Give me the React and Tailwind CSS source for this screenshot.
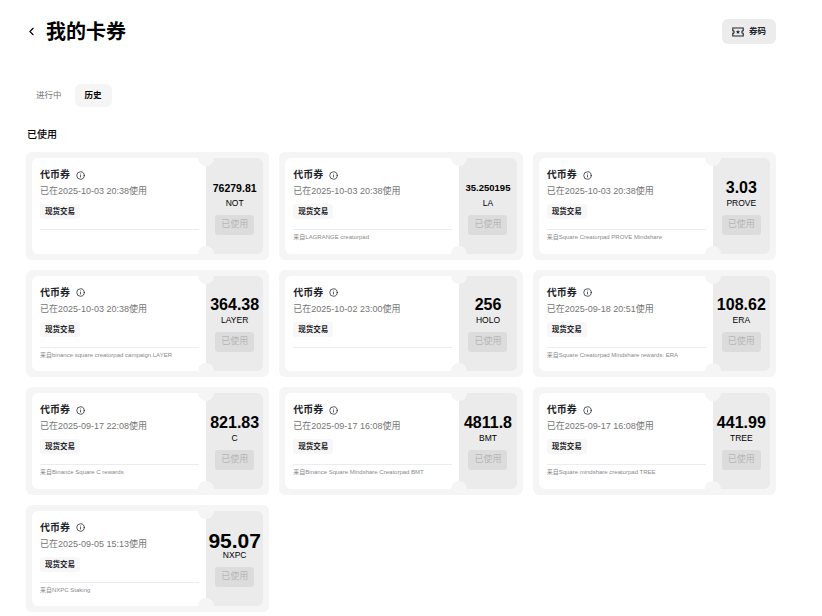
import { ChevronLeft, Info } from 'lucide-react'

const coupons = [
  { amount: '76279.81', size: 'text-[10.5px]', symbol: 'NOT', date: '2025-10-03 20:38' },
  { amount: '35.250195', size: 'text-[9.5px]', symbol: 'LA', date: '2025-10-03 20:38', from: 'LAGRANGE creatorpad' },
  { amount: '3.03', size: 'text-[16px]', symbol: 'PROVE', date: '2025-10-03 20:38', from: 'Square Creatorpad PROVE Mindshare' },
  { amount: '364.38', size: 'text-[16px]', symbol: 'LAYER', date: '2025-10-03 20:38', from: 'binance square creatorpad campaign LAYER' },
  { amount: '256', size: 'text-[16px]', symbol: 'HOLO', date: '2025-10-02 23:00' },
  { amount: '108.62', size: 'text-[16px]', symbol: 'ERA', date: '2025-09-18 20:51', from: 'Square Creatorpad Mindshare rewards: ERA' },
  { amount: '821.83', size: 'text-[16px]', symbol: 'C', date: '2025-09-17 22:08', from: 'Binance Square C rewards' },
  { amount: '4811.8', size: 'text-[16px]', symbol: 'BMT', date: '2025-09-17 16:08', from: 'Binance Square Mindshare Creatorpad BMT' },
  { amount: '441.99', size: 'text-[16px]', symbol: 'TREE', date: '2025-09-17 16:08', from: 'Square mindshare creatorpad TREE' },
  { amount: '95.07', size: 'text-[21px]', symbol: 'NXPC', date: '2025-09-05 15:13', from: 'NXPC Staking', tight: true },
]

function TicketIcon() {
  return (
    <svg width="12" height="12" viewBox="0 0 12 12" fill="none" stroke="#1e2329" strokeWidth="1.1">
      <path d="M.8 2h10.4v2.6a1.4 1.4 0 0 0 0 2.8V10H.8V7.4a1.4 1.4 0 0 0 0-2.8z" />
      <path d="M6 3.8l.6 1.4 1.5.1-1.1 1 .3 1.5L6 7l-1.3.8.3-1.5-1.1-1 1.5-.1z" fill="#1e2329" stroke="none" />
    </svg>
  )
}

function CouponCard({ coupon }) {
  return (
    <div className="h-[107.5px] rounded-md bg-[#f5f5f5] p-[6px]">
      <div className="relative flex h-full overflow-hidden rounded-md">
        <div className="w-[174px] bg-white pl-2 pr-[7px] pt-[11px]">
          <div className="flex items-center gap-[6px] text-[10px] font-bold leading-3 text-[#1e2329]">
            代币券
            <Info className="h-[9px] w-[9px]" strokeWidth={2} />
          </div>
          <p className="mt-[3px] whitespace-nowrap text-[9px] leading-[14px] text-[#757575]">
            已在{coupon.date}使用
          </p>
          <span className="mt-[6px] block w-fit rounded-[3px] bg-[#f7f7f7] px-[5px] text-[7.5px] font-bold leading-[15px] text-[#1e2329]">
            现货交易
          </span>
          <div className="mt-[10px] border-t border-[#eaecef] pt-[3px] text-[6px] leading-[8px] whitespace-nowrap text-[#8a8a8a]">
            {coupon.from ? `来自${coupon.from}` : ''}
          </div>
        </div>
        <div className="flex flex-1 flex-col items-center justify-end bg-[#ebebeb] pb-[19px]">
          <p className={`${coupon.size} font-bold leading-[16px] text-black`}>{coupon.amount}</p>
          <p className={`${coupon.tight ? 'mt-[1px] leading-[10px]' : 'leading-[14px]'} text-[8.5px] text-black`}>{coupon.symbol}</p>
          <button
            type="button"
            className={`${coupon.tight ? 'mt-[7px]' : 'mt-[5px]'} h-5 w-[39px] rounded-[3px] bg-[#dcdcdc] text-[9px] text-[#b7b7b7]`}
          >
            已使用
          </button>
        </div>
        <span className="absolute -top-2 left-[166px] h-4 w-4 rounded-full bg-[#f5f5f5]" />
        <span className="absolute -bottom-2 left-[166px] h-4 w-4 rounded-full bg-[#f5f5f5]" />
      </div>
    </div>
  )
}

export default function App() {
  return (
    <div className="h-[616px] overflow-hidden bg-white pl-[26px] pr-[46px] pt-[19px] font-['Liberation_Sans','Noto_Sans_CJK_SC',sans-serif] text-[#1e2329]">
      <header className="flex h-[25px] items-center justify-between">
        <div className="flex items-center gap-[8px]">
          <ChevronLeft className="ml-[-1px] h-[13px] w-[13px] text-black" strokeWidth={2} />
          <h1 className="text-[20px] font-bold text-black">我的卡券</h1>
        </div>
        <button
          type="button"
          className="flex h-[25px] w-[54px] items-center justify-center gap-[5px] rounded-md bg-[#ececec] text-[8.5px] font-bold"
        >
          <TicketIcon />
          券码
        </button>
      </header>

      <div className="mt-10 flex h-[23px] items-center gap-[3px] text-[8.5px]">
        <span className="px-[10px] text-[#757575]">进行中</span>
        <span className="rounded-md bg-[#f5f5f5] px-[10px] font-bold leading-[23px] text-black">历史</span>
      </div>

      <h2 className="mt-[21px] pl-px text-[10px] font-medium leading-[14px] text-black">已使用</h2>

      <div className="mt-[10px] grid grid-cols-3 gap-[10px]">
        {coupons.map((coupon) => (
          <CouponCard key={coupon.symbol} coupon={coupon} />
        ))}
      </div>
    </div>
  )
}
